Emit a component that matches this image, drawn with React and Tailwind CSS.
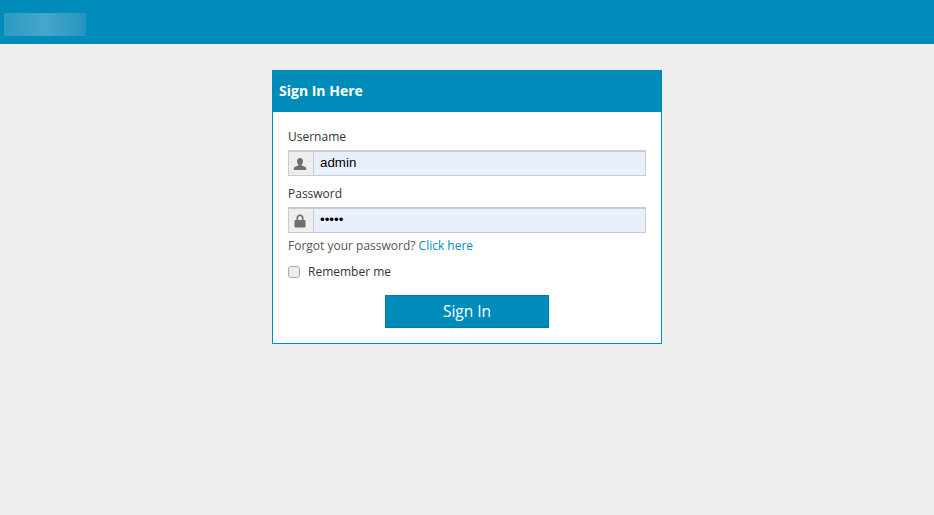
import React from "react";

const UserIcon = () => (
  <svg width="14" height="14" viewBox="0 0 14 14" className="text-[#6f6f6f]" fill="currentColor">
    <path d="M7 1C5.100 1 4 2.400 4 4.200c0 1.300.5 2.600 1.300 3.300v1L2 9.800c-.8.4-1.200.8-1.200 1.500V13h12.400v-1.700c0-.7-.4-1.100-1.200-1.500L8.700 8.500v-1C9.500 6.800 10 5.500 10 4.200 10 2.400 8.900 1 7 1z" />
  </svg>
);

const LockIcon = () => (
  <svg width="14" height="14" viewBox="0 0 14 14" className="text-[#6f6f6f]" fill="currentColor">
    <path d="M7 .5C5 .5 3.500 1.800 3.500 3.800V6H2.500C1.900 6 1.500 6.300 1.500 6.900v5.700c0 .6.4.9 1 .9h9c.6 0 1-.3 1-.9V6.900c0-.6-.4-.9-1-.9h-1V3.800C10.500 1.800 9 .5 7 .5zM5.200 6V3.800C5.200 2.800 5.900 2.200 7 2.200s1.800.6 1.800 1.600V6H5.200z" />
  </svg>
);

const Field = ({ label, type, value, icon }) => (
  <div>
    <label className="block mb-[4px] text-[12px] leading-[18px] text-[#333]">{label}</label>
    <div className="flex h-[26px]">
      <span className="w-[26px] pr-[2px] flex items-center justify-center bg-[#eee] border border-[#ccc] border-t-2">
        {icon}
      </span>
      <input
        type={type}
        value={value}
        readOnly
        className="flex-1 min-w-0 px-[6px] pb-[2px] bg-[#e8f0fe] border border-l-0 border-[#ccc] border-t-2 text-[13.33px] text-black outline-none font-['Liberation_Sans',sans-serif]"
      />
    </div>
  </div>
);

export default function App() {
  return (
    <div className="min-h-[515px] bg-[#eee] font-['Open_Sans',sans-serif]">
      <header className="h-[44px] bg-[#008cba] pl-[4px] pt-[13px]">
        <div className="w-[82px] h-[23px] bg-gradient-to-r from-[#2b9ac3] via-[#45a6c9] to-[#2593bf]"></div>
      </header>

      <div className="flex justify-center pt-[26px]">
        <div className="w-[390px] bg-white border border-[#008cba]">
          <div className="h-[41px] bg-[#008cba] flex items-center px-[6px]">
            <h2 className="text-[14px] font-bold text-white pb-[2px]">Sign In Here</h2>
          </div>
          <form className="px-[15px] pt-[16px] pb-[15px]">
            <Field label="Username" type="text" value="admin" icon={<UserIcon />} />
            <div className="mt-[9px]">
              <Field label="Password" type="password" value="admin" icon={<LockIcon />} />
            </div>
            <p className="mt-[4px] text-[12px] leading-[18px] text-[#555]">
              Forgot your password? <a className="text-[#008cba]">Click here</a>
            </p>
            <label className="mt-[8px] flex items-center text-[12px] leading-[18px] text-[#333]">
              <span className="w-[12px] h-[12px] rounded-[3px] border border-[#aaa] bg-[#eee] mr-[8px]"></span>
              Remember me
            </label>
            <div className="flex justify-center mt-[14px]">
              <button type="button" className="w-[164px] h-[33px] bg-[#008cba] border border-[#007ba7] text-white text-[15.500px]">
                Sign In
              </button>
            </div>
          </form>
        </div>
      </div>
    </div>
  );
}
